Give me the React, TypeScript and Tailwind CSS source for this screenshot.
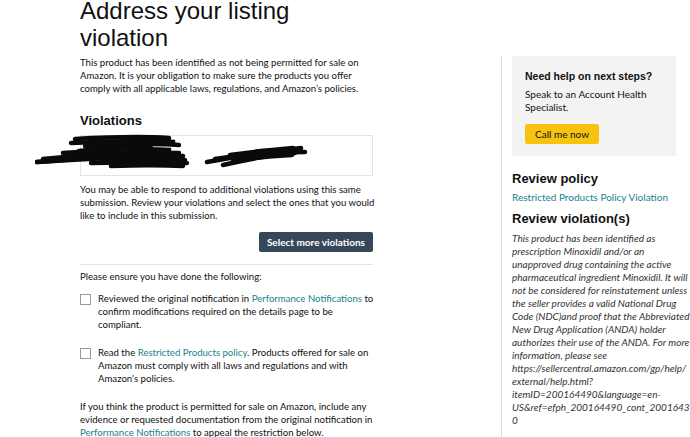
import React from 'react';

const body = { fontFamily: 'Lato, "Noto Sans", sans-serif' };
const head = { fontFamily: '"Liberation Sans", Arial, sans-serif' };

const Checkbox = () => (
  <span className="mt-[2px] block h-[11px] w-[11px] flex-shrink-0 border border-[#9a9a9a] bg-white" />
);

// marker strokes that hide the violation ids
const Scribble = () => (
  <svg className="pointer-events-none absolute left-[-46px] top-[-3px]" width="280" height="40" viewBox="0 0 280 40" fill="none">
    <g stroke="#0a0a0a" strokeLinecap="round" strokeWidth="4.5">
      <path d="M40 6 C 75 4, 105 3, 134 5" />
      <path d="M36 10 C 75 8, 115 7, 140 9 C 106 12, 66 15, 44 18" />
      <path d="M50 13 C 85 11, 115 10, 144 12" />
      <path d="M28 20 C 66 17, 106 15, 136 17 C 96 21, 56 25, 2 29" />
      <path d="M2 29 C 46 26, 96 24, 148 23" />
      <path d="M8 26 C 56 21, 106 19, 144 20" />
      <path d="M66 27 C 96 25, 126 25, 150 27" />
      <path d="M56 30 C 96 29, 126 29, 152 30" />
      <path d="M76 33 C 106 32, 126 32, 148 33" />
      <path d="M86 16 C 96 15, 106 14, 116 15" />
      <path d="M172 29 C 195 25, 225 20, 266 15" />
      <path d="M180 26 C 205 22, 235 19, 270 19" />
      <path d="M195 22 C 215 19, 235 17, 258 15" />
      <path d="M188 32 C 210 27, 235 22, 264 18" />
      <path d="M205 24 C 220 22, 240 21, 260 20" />
      <path d="M198 28 C 215 25, 235 23, 257 22" />
    </g>
  </svg>
);

export default function App() {
  return (
    <div className="h-[437px] w-[690px] overflow-hidden bg-white text-[#111]" style={body}>
      <div className="flex">
        <div className="w-[376px] flex-shrink-0 pl-[80px]">
          <h1 className="mt-[-3px] text-[24px] leading-[27px] font-normal text-[#111]" style={head}>
            Address your listing<br />violation
          </h1>
          <p className="mt-[5px] text-[9.6px] leading-[13px]">
            This product has been identified as not being permitted for sale on Amazon. It is your obligation to make sure the products you offer comply with all applicable laws, regulations, and Amazon’s policies.
          </p>

          <h2 className="mt-[18px] text-[13px] leading-[15px] font-bold text-[#111]" style={head}>Violations</h2>
          <div className="relative mr-[3px] mt-[7px] h-[41px] border border-[#e3e3e3]">
            <Scribble />
          </div>

          <p className="mt-[7px] text-[9.6px] leading-[13px]">
            You may be able to respond to additional violations using this same submission. Review your violations and select the ones that you would like to include in this submission.
          </p>

          <div className="mr-[3px] mt-[10px] flex justify-end">
            <button className="h-[20px] rounded-[2px] bg-[#37475a] px-[8px] text-[10px] font-bold text-white">
              Select more violations
            </button>
          </div>

          <div className="mr-[3px] mt-[12px] border-t border-[#e3e3e3]" />

          <p className="mt-[5px] text-[9.6px] leading-[13px]">Please ensure you have done the following:</p>

          <div className="mt-[9px] flex gap-[7px]">
            <Checkbox />
            <p className="text-[9.6px] leading-[13px]">
              Reviewed the original notification in <span className="text-[#1a7f8e]">Performance Notifications</span> to confirm modifications required on the details page to be compliant.
            </p>
          </div>

          <div className="mt-[15px] flex gap-[7px]">
            <Checkbox />
            <p className="text-[9.6px] leading-[13px]">
              Read the <span className="text-[#1a7f8e]">Restricted Products policy</span>. Products offered for sale on Amazon must comply with all laws and regulations and with Amazon's policies.
            </p>
          </div>

          <p className="mt-[15px] text-[9.6px] leading-[13px]">
            If you think the product is permitted for sale on Amazon, include any evidence or requested documentation from the original notification in <span className="text-[#1a7f8e]">Performance Notifications</span> to appeal the restriction below.
          </p>
        </div>

        <div className="ml-[125px] mt-[56px] w-[193px] flex-shrink-0 border-l border-[#dcdcdc] pl-[10px] pb-[40px]">
          <div className="w-[164px] bg-[#f3f3f3] px-[13px] pt-[13px] pb-[12px]">
            <h3 className="whitespace-nowrap text-[10.5px] leading-[14px] font-bold text-[#111]" style={head}>Need help on next steps?</h3>
            <p className="mt-[5px] text-[10px] leading-[13px]">Speak to an Account Health Specialist.</p>
            <button className="mt-[10px] h-[20px] rounded-[2px] bg-[#f7c30f] px-[10px] text-[10px] text-[#0f1111]">
              Call me now
            </button>
          </div>

          <h2 className="mt-[15px] text-[13px] leading-[16px] font-bold text-[#111]" style={head}>Review policy</h2>
          <p className="mt-[4px] text-[10px] leading-[13px] text-[#1a7f8e]">Restricted Products Policy Violation</p>
          <h2 className="mt-[7px] text-[13px] leading-[16px] font-bold text-[#111]" style={head}>Review violation(s)</h2>
          <p className="mt-[5px] text-[10px] leading-[13px] break-words italic text-[#333]">
            This product has been identified as prescription Minoxidil and/or an unapproved drug containing the active pharmaceutical ingredient Minoxidil. It will not be considered for reinstatement unless the seller provides a valid National Drug Code (NDC)and proof that the Abbreviated New Drug Application (ANDA) holder authorizes their use of the ANDA. For more information, please see https://sellercentral.amazon.com/gp/help/<wbr />external/help.html?<wbr />itemID=200164490&amp;language=en-<wbr /><span className="whitespace-nowrap">US&amp;ref=efph_200164490_cont_20016433</span><wbr />0
          </p>
        </div>
      </div>
    </div>
  );
}
